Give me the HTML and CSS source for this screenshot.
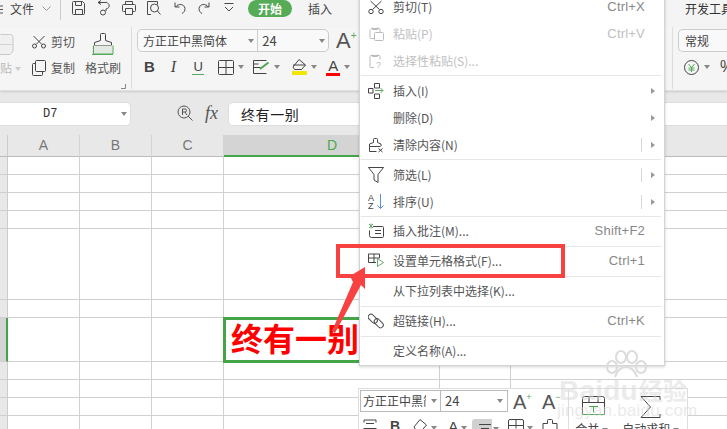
FILE: index.html
```html
<!DOCTYPE html>
<html lang="zh">
<head>
<meta charset="utf-8">
<title>WPS 表格</title>
<link rel="stylesheet" href="styles.css">
</head>
<body>
<div class="app">
  <header class="topbar">
    <svg class="tb-menu" width="3" height="12" viewBox="0 0 3 12"><path d="M0 3h3M0 6.500h3M0 10h3" stroke="#555" fill="none"/></svg>
    <span class="tb-file">文件</span>
    <svg class="tb-chev" width="9" height="6" viewBox="0 0 9 6"><path d="M.5.500 4.500 4.500 8.500.500" stroke="#999" fill="none"/></svg>
    <span class="tb-div"></span>
    <svg class="tb-i tb-save" width="16" height="16" viewBox="0 0 16 16"><path d="M2.500 1.500h9l2 2v10a1 1 0 0 1-1 1h-10a1 1 0 0 1-1-1v-11a1 1 0 0 1 1-1zM4.500 1.500v4h6v-4M4.500 14.500v-5h7v5" stroke="#4a4a4a" fill="none"/></svg>
    <svg class="tb-i" width="16" height="16" viewBox="0 0 16 16"><path d="M1 2.500h6a4 4 0 0 1 5 2c1 2.500-1 4-3 4.500v2M1 2.500l3-2M1 2.500l3 2" stroke="#4a4a4a" fill="none"/><circle cx="6" cy="12.500" r="2.500" stroke="#4a4a4a" fill="none"/></svg>
    <svg class="tb-i tb-print" width="16" height="16" viewBox="0 0 16 16"><path d="M4.500 4.500v-3h7v3M4 11.500h-1.500a1 1 0 0 1-1-1v-5a1 1 0 0 1 1-1h11a1 1 0 0 1 1 1v5a1 1 0 0 1-1 1h-1.500M4.500 8.500h7v6h-7z" stroke="#4a4a4a" fill="none"/></svg>
    <svg class="tb-i tb-prev" width="16" height="16" viewBox="0 0 16 16"><path d="M5 14.500h-3.500v-13h10v3" stroke="#4a4a4a" fill="none"/><circle cx="8.500" cy="8" r="4" stroke="#4a4a4a" fill="none"/><path d="M11.500 11l3 3.500" stroke="#4a4a4a" fill="none"/></svg>
    <svg class="tb-i tb-undo" width="16" height="16" viewBox="0 0 16 16"><path d="M3 2.500v4.500h4.500M3.500 7c3-4 9-3 9.500 1.500.2 2-1 4-3 5" stroke="#4a4a4a" fill="none"/></svg>
    <svg class="tb-i tb-redo" width="16" height="16" viewBox="0 0 16 16"><path d="M13 2.500v4.500h-4.500M12.500 7c-3-4-9-3-9.500 1.500-.2 2 1 4 3 5" stroke="#4a4a4a" fill="none"/></svg>
    <svg class="tb-i tb-more" width="16" height="16" viewBox="0 0 16 16"><path d="M3.500 3.500h9M4 7l4 4 4-4" stroke="#4a4a4a" fill="none"/></svg>
    <span class="tb-pill">开始</span>
    <span class="tb-tab">插入</span>
    <span class="tb-dev">开发工具</span>
  </header>

  <section class="ribbon">
    <div class="rb-clip">
      <div class="rb-paste">
        <svg width="14" height="24" viewBox="0 0 14 24"><path d="M.5 2.500h9a3 3 0 0 1 3.500 3v13.500l-3 3.500h-10" stroke="#c8c8c8" fill="#f0f0f0"/><path d="M0 12.500h13.500" stroke="#d4d4d4" fill="none"/></svg>
        <span class="rb-paste-label">贴<i class="caret caret-pale"></i></span>
      </div>
      <div class="rb-cut">
        <div class="rb-line">
          <svg width="14" height="14" viewBox="0 0 14 14"><circle cx="2.500" cy="11" r="2" stroke="#444" fill="none"/><circle cx="11.500" cy="11" r="2" stroke="#444" fill="none"/><path d="M1.500 1 10 9.500M12.500 1 4 9.500" stroke="#444" fill="none"/></svg>
          <span>剪切</span>
        </div>
        <div class="rb-line">
          <svg width="14" height="16" viewBox="0 0 14 16"><path d="M4.500.500h8a1 1 0 0 1 1 1v9a1 1 0 0 1-1 1h-8a1 1 0 0 1-1-1v-9a1 1 0 0 1 1-1zM3.500 3.500h-2a1 1 0 0 0-1 1v10a1 1 0 0 0 1 1h8a1 1 0 0 0 1-1v-3" stroke="#444" fill="none"/></svg>
          <span>复制</span>
        </div>
      </div>
      <div class="rb-brush">
        <svg width="22" height="22" viewBox="0 0 22 22"><path d="M8.500 7.500v-6a1 1 0 0 1 1-1h3a1 1 0 0 1 1 1v6l6 2v3h-17v-3z" stroke="#444" fill="#f5f5f5"/><path d="M1.500 12.500h19v9h-21v-9" fill="#e3e9e3"/><path d="M1.500 12.500v8.500h19.500v-8.500M0 21.500h21" stroke="#56a95c" fill="none"/></svg>
        <span>格式刷</span>
      </div>
      <svg class="rb-launch" width="5" height="5" viewBox="0 0 5 5"><path d="M4.500 0v4.500h-4.500" stroke="#888" fill="none"/></svg>
    </div>

    <div class="rb-font">
      <div class="rb-font-top">
        <div class="combo">
          <span class="combo-name">方正正中黑简体<i class="caret"></i></span>
          <span class="combo-size">24<i class="caret"></i></span>
        </div>
        <span class="grow-a">A<sup>+</sup></span>
      </div>
      <div class="rb-font-bottom">
        <b class="fb-b">B</b>
        <i class="fb-i">I</i>
        <span class="fb-u">U</span>
        <svg class="fb-border" width="16" height="15" viewBox="0 0 16 15"><path d="M1.500.500h13a1 1 0 0 1 1 1v12a1 1 0 0 1-1 1h-13a1 1 0 0 1-1-1v-12a1 1 0 0 1 1-1zM8 .5v14M.5 7.500h15" stroke="#444" fill="none"/></svg><i class="caret"></i>
        <svg class="fb-cond" width="17" height="15" viewBox="0 0 17 15"><path d="M13.500.500h-13v13h13M.5 7.500h7M.5 4h5" stroke="#444" fill="none"/><path d="M7 9 15.500 2.500" stroke="#4da654" stroke-width="2" fill="none"/></svg><i class="caret"></i>
        <svg class="fb-fill" width="16" height="17" viewBox="0 0 16 17"><path d="M8 .5 14.500 6l-4 4.500h-7l-1.500-2.500z" stroke="#444" fill="none"/><path d="M2 6h12.500" stroke="#444" fill="none"/><path d="M1 12h14a1 1 0 0 1 1 1v2a1 1 0 0 1-1 1h-14z" fill="#f4e500"/></svg><i class="caret"></i>
        <span class="fb-a">A</span><i class="caret"></i>
      </div>
    </div>

    <div class="rb-num">
      <div class="num-combo">常规</div>
      <div class="num-row">
        <svg width="15" height="15" viewBox="0 0 15 15"><circle cx="7.500" cy="7.500" r="7" stroke="#444" fill="none"/><path d="M4.500 4 7.500 7.500 10.500 4M7.500 7.500v4.500M4.500 8h6M4.500 10h6" stroke="#4da654" fill="none"/></svg>
        <i class="caret"></i>
        <span class="num-pct">%</span>
      </div>
    </div>
  </section>

  <section class="formula">
    <div class="namebox"><span>D7</span><i class="caret"></i></div>
    <svg class="fx-search" width="17" height="17" viewBox="0 0 17 17"><circle cx="7" cy="7" r="6" stroke="#555" fill="none"/><path d="M5.500 10v-6h2.500a1.500 1.500 0 0 1 0 3h-2.500M8 7l2 3M11 11l4.500 4.500" stroke="#555" fill="none"/></svg>
    <span class="fx-label">fx</span>
    <div class="fx-input">终有一别</div>
  </section>

  <section class="sheet">
    <div class="heads">
      <span class="h-corner"></span>
      <span class="h h-a">A</span>
      <span class="h h-a">B</span>
      <span class="h h-a">C</span>
      <span class="h h-d">D</span>
      <span class="h h-e"></span>
      <span class="h h-f">F</span>
    </div>
    <div class="r"><i class="g"></i><i class="c"></i><i class="c"></i><i class="c"></i><i class="c d"></i><i class="c e"></i><i class="c f"></i></div>
    <div class="r"><i class="g"></i><i class="c"></i><i class="c"></i><i class="c"></i><i class="c d"></i><i class="c e"></i><i class="c f"></i></div>
    <div class="r"><i class="g"></i><i class="c"></i><i class="c"></i><i class="c"></i><i class="c d"></i><i class="c e"></i><i class="c f"></i></div>
    <div class="r"><i class="g"></i><i class="c"></i><i class="c"></i><i class="c"></i><i class="c d"></i><i class="c e"></i><i class="c f"></i></div>
    <div class="r r-tall"><i class="g"></i><i class="c"></i><i class="c"></i><i class="c"></i><i class="c d"></i><i class="c e"></i><i class="c f"></i></div>
    <div class="r"><i class="g"></i><i class="c"></i><i class="c"></i><i class="c"></i><i class="c d"></i><i class="c e"></i><i class="c f"></i></div>
    <div class="r r-sel"><i class="g g-sel"></i><i class="c"></i><i class="c"></i><i class="c"></i><div class="c d cell-sel">终有一别</div><i class="c e"></i><i class="c f"></i></div>
    <div class="r"><i class="g"></i><i class="c"></i><i class="c"></i><i class="c"></i><i class="c d"></i><i class="c e"></i><i class="c f"></i></div>
    <div class="r"><i class="g"></i><i class="c"></i><i class="c"></i><i class="c"></i><i class="c d"></i><i class="c e"></i><i class="c f"></i></div>
    <div class="r"><i class="g"></i><i class="c"></i><i class="c"></i><i class="c"></i><i class="c d"></i><i class="c e"></i><i class="c f"></i></div>
    <div class="r"><i class="g"></i><i class="c"></i><i class="c"></i><i class="c"></i><i class="c d"></i><i class="c e"></i><i class="c f"></i></div>
  </section>

  <nav class="menu">
    <div class="mi">
      <svg width="16" height="16" viewBox="0 0 16 16"><circle cx="3" cy="12.500" r="2.200" stroke="#444" fill="none"/><circle cx="13" cy="12.500" r="2.200" stroke="#444" fill="none"/><path d="M2.500 2 11.500 10.500M13.500 2 4.500 10.500" stroke="#444" fill="none"/></svg>
      <span class="ml">剪切(T)</span><span class="ms">Ctrl+X</span>
    </div>
    <div class="mi off">
      <svg width="16" height="16" viewBox="0 0 16 16"><path d="M3 2.500h8a1 1 0 0 1 1 1v2.500M6 12.500h-3a1 1 0 0 1-1-1v-8M4.500 1.500v2h5v-2" stroke="#bbb" fill="none"/><rect x="6.500" y="6.500" width="9" height="8" rx="1" stroke="#bbb" fill="none"/></svg>
      <span class="ml">粘贴(P)</span><span class="ms">Ctrl+V</span>
    </div>
    <div class="mi off">
      <svg width="16" height="16" viewBox="0 0 16 16"><path d="M6 14.500h-3a1 1 0 0 1-1-1v-10a1 1 0 0 1 1-1h8a1 1 0 0 1 1 1v3M4.500 1.500v2h5v-2" stroke="#bbb" fill="none"/><text class="mq" x="8" y="15">?</text></svg>
      <span class="ml">选择性粘贴(S)...</span>
    </div>
    <div class="msep"></div>
    <div class="mi">
      <svg width="16" height="16" viewBox="0 0 16 16"><path d="M.5 5.500h4.500v4.500h-4.500zM6.500.5h5v4.500h-5zM6.500 11h5v4.500h-5z" stroke="#444" fill="none"/><path d="M7 7.500h8M12.500 5l2.500 2.500-2.500 2.500" stroke="#62a86b" fill="none"/></svg>
      <span class="ml">插入(I)</span><i class="arr"></i>
    </div>
    <div class="mi">
      <span class="noicon"></span>
      <span class="ml">删除(D)</span><i class="arr"></i>
    </div>
    <div class="mi">
      <svg width="16" height="16" viewBox="0 0 16 16"><path d="M5.500 5.500v-3a1 1 0 0 1 1-1h2a1 1 0 0 1 1 1v3l3.500 1.500v2M1.500 9.500v5h7M1.500 9.500v-2.500l4-1.500M1.500 9.500h11" stroke="#444" fill="none"/><path d="M10.500 11.500l4 3.500M14.500 11.500l-4 3.500" stroke="#444" fill="none"/></svg>
      <span class="ml">清除内容(N)</span><i class="rule"></i><i class="arr"></i>
    </div>
    <div class="msep"></div>
    <div class="mi">
      <svg width="16" height="16" viewBox="0 0 16 16"><path d="M.5.500h15l-5.500 7v8l-4-2.500v-5.500z" stroke="#444" fill="none"/></svg>
      <span class="ml">筛选(L)</span><i class="rule"></i><i class="arr"></i>
    </div>
    <div class="mi">
      <svg width="16" height="17" viewBox="0 0 16 17"><text class="az" x="0" y="7.500">A</text><text class="az" x="0" y="16">Z</text><path d="M12.500 1v14.500M9.500 12.500l3 3 3-3" stroke="#5b8fd6" fill="none"/></svg>
      <span class="ml">排序(U)</span><i class="rule"></i><i class="arr"></i>
    </div>
    <div class="msep"></div>
    <div class="mi mi-up">
      <svg width="16" height="16" viewBox="0 0 16 16"><path d="M5 3.500h9.500a1 1 0 0 1 1 1v9a1 1 0 0 1-1 1h-11a2 2 0 0 1-2-2v-5M7 7.500h6M7 10.500h6" stroke="#444" fill="none"/><path d="M1 1l4 4M5 1l-4 4M3 .5v5" stroke="#62a86b" fill="none"/></svg>
      <span class="ml">插入批注(M)...</span><span class="ms">Shift+F2</span>
    </div>
    <div class="msep"></div>
    <div class="mi mi-up">
      <svg width="16" height="16" viewBox="0 0 16 16"><path d="M8 9.500h-7.500v-8.500h11v4M.5 5h11M6 1v8.500" stroke="#444" fill="none"/><path d="M9.500 5.500v8l6-4z" stroke="#62a86b" fill="none"/></svg>
      <span class="ml">设置单元格格式(F)...</span><span class="ms">Ctrl+1</span>
    </div>
    <div class="msep"></div>
    <div class="mi mi-up">
      <span class="noicon"></span>
      <span class="ml">从下拉列表中选择(K)...</span>
    </div>
    <div class="msep"></div>
    <div class="mi mi-up">
      <svg width="16" height="16" viewBox="0 0 16 16"><rect x="-.5" y="3" width="10.500" height="5.500" rx="2.700" transform="rotate(45 4.750 5.750)" stroke="#444" fill="none"/><rect x="5.500" y="7.500" width="10.500" height="5.500" rx="2.700" transform="rotate(45 10.750 10.250)" stroke="#444" fill="none"/></svg>
      <span class="ml">超链接(H)...</span><span class="ms">Ctrl+K</span>
    </div>
    <div class="msep"></div>
    <div class="mi mi-up">
      <span class="noicon"></span>
      <span class="ml">定义名称(A)...</span>
    </div>
  </nav>

  <div class="mini">
    <div class="mini-top">
      <div class="mini-combo">
        <span class="mc-name"><span class="mc-text">方正正中黑简体</span><i class="caret"></i></span>
        <span class="mc-size">24<i class="caret"></i></span>
      </div>
      <span class="mini-a">A<sup>+</sup></span>
      <span class="mini-a mini-a2">A<sup>−</sup></span>
      <span class="mini-div"></span>
      <svg class="mini-merge" width="23" height="19" viewBox="0 0 23 19"><path d="M.5 18.500v-16a2 2 0 0 1 2-2h18a2 2 0 0 1 2 2v16" stroke="#444" fill="none"/><path d="M.5 6.500h22" stroke="#444" fill="none"/><path d="M7 .5v6M16 .5v6" stroke="#444" fill="none"/><path d="M.5 18.500h22M7 10.500h9M11.500 10.500v6" stroke="#4da654" fill="none"/></svg>
      <svg class="mini-sum" width="21" height="22" viewBox="0 0 21 22"><path d="M20 4v-3.500h-19l9.500 10.500-9.500 10.500h19v-3.500" stroke="#444" fill="none"/></svg>
    </div>
    <div class="mini-bottom">
      <svg class="mb-a" width="14" height="10" viewBox="0 0 14 10"><path d="M1 3.500v-2.500h12v2.500M3 4.500h8M.5 9.500h13" stroke="#444" fill="none"/></svg>
      <b class="mb-b">B</b>
      <svg class="mb-c" width="16" height="10" viewBox="0 0 16 10"><path d="M8 .5 14.500 6l-4 4.500h-7l-1.500-2.500z" stroke="#444" fill="none"/></svg><i class="caret"></i>
      <span class="mb-t">A</span><i class="caret"></i>
      <span class="mb-hl"><svg width="14" height="10" viewBox="0 0 14 10"><path d="M1 1.500h12M3 5.500h8" stroke="#444" fill="none"/></svg><i class="mb-hl-end"><i class="caret"></i></i></span>
      <svg class="mb-g" width="16" height="10" viewBox="0 0 16 10"><path d="M.5 10v-8a1.500 1.500 0 0 1 1.500-1.500h12a1.500 1.500 0 0 1 1.500 1.500v8M.5 6.500h15M8 .5v9" stroke="#444" fill="none"/></svg><i class="caret"></i>
      <svg class="mb-s" width="16" height="10" viewBox="0 0 16 10"><path d="M5.500 4.500v-3a1 1 0 0 1 1-1h3a1 1 0 0 1 1 1v3h4.500v5.500M1 10v-5.500h4.500" stroke="#444" fill="none"/></svg>
      <span class="mb-l1">合并<i class="caret"></i></span>
      <span class="mb-l2">自动求和<i class="caret"></i></span>
    </div>
  </div>

  <div class="wm">
    <svg class="wm-paw" width="54" height="28" viewBox="0 0 54 28"><g fill="none" stroke="#dcdcdc" stroke-width="2"><ellipse cx="13" cy="17" rx="5" ry="6"/><ellipse cx="22" cy="7" rx="5" ry="6"/><ellipse cx="33" cy="7" rx="5" ry="6"/><ellipse cx="42" cy="17" rx="5" ry="6"/><path d="M16 27c2-7 7-10 11-10s9 3 11 10"/></g></svg>
    <div class="wm-b">Baidu<span class="wm-cn">经验</span></div>
    <div class="wm-u">jingyan.baidu.com</div>
  </div>

  <div class="note-box"></div>
  <svg class="note-arrow" width="40" height="70" viewBox="0 0 40 70"><path d="M2 66 23 17 20 11 35 2 35 24 31 20 5 68z" fill="#f84242"/></svg>
</div>
</body>
</html>
```

FILE: styles.css
```css
* { box-sizing: border-box; }
html, body { margin: 0; padding: 0; }
body { font-family: "Noto Sans CJK SC", "Liberation Sans", sans-serif; font-size: 12px; color: #444; }
i { font-style: normal; }

.app { position: relative; width: 727px; height: 429px; overflow: hidden; background: #fff; }

.caret { display: inline-block; flex: none; width: 0; height: 0; border-left: 3.5px solid transparent; border-right: 3.5px solid transparent; border-top: 4px solid #888; }
.caret-pale { border-top-color: #ccc; margin-left: 3px; vertical-align: 2px; }

/* top bar */
.topbar { display: flex; align-items: flex-start; height: 27px; background: #f4f4f4; line-height: 18px; white-space: nowrap; }
.topbar > * { flex: none; }
.tb-menu { margin-top: 3px; }
.tb-file { margin-left: 7px; color: #444; }
.tb-chev { margin: 6px 0 0 8px; }
.tb-div { width: 1px; height: 20px; margin-left: 9px; background: #ccc; }
.tb-save { margin-left: 10px; }
.tb-i + .tb-i { margin-left: 10px; }
.tb-i.tb-print { margin-left: 8px; }
.tb-i.tb-prev { margin-left: 9px; }
.tb-i.tb-undo { margin-left: 10px; }
.tb-i.tb-redo { margin-left: 8px; }
.tb-i.tb-more { margin-left: 9px; }
.tb-pill { width: 44px; height: 17px; margin-left: 11px; border-radius: 9px; background: #56ab57; color: #fff; font-weight: 700; text-align: center; line-height: 17px; }
.tb-tab { margin-left: 16px; }
.tb-dev { margin-left: 353px; color: #333; }

/* ribbon */
.ribbon { display: flex; height: 64px; background: #f5f5f5; border-bottom: 1px solid #e0e0e0; box-shadow: 0 1px 2px rgba(0,0,0,.12); position: relative; }
.rb-clip { display: flex; align-items: flex-start; width: 132px; height: 62px; border-right: 1px solid #ddd; flex: none; }
.rb-paste { width: 32px; flex: none; padding-top: 5px; display: flex; flex-direction: column; }
.rb-paste-label { color: #bbb; margin-top: 3px; line-height: 18px; }
.rb-cut { width: 53px; flex: none; padding-top: 6px; display: flex; flex-direction: column; gap: 8px; }
.rb-line { display: flex; align-items: center; gap: 5px; height: 18px; color: #555; line-height: 18px; }
.rb-brush { width: 36px; flex: none; padding-top: 6px; display: flex; flex-direction: column; align-items: center; color: #555; line-height: 18px; gap: 4px; }
.rb-launch { margin: 57px 0 0 0; flex: none; }

.rb-font { width: 540px; flex: none; padding: 2px 0 0 5px; }
.rb-font-top { display: flex; align-items: center; height: 23px; }
.combo { display: flex; width: 192px; height: 23px; border: 1px solid #ccc; border-radius: 5px; background: #f9f9f9; line-height: 21px; }
.combo-name { display: flex; align-items: center; justify-content: space-between; width: 121px; padding: 0 3px 0 5px; border-right: 1px solid #ccc; font-size: 12px; color: #444; }
.combo-size { display: flex; align-items: center; justify-content: space-between; width: 70px; padding: 0 3px 0 4px; font-size: 13px; }
.grow-a { margin-left: 7px; font: 22px/23px "Liberation Sans", sans-serif; color: #555; }
.grow-a sup { font-size: 10px; color: #5aa860; line-height: 0; vertical-align: 9px; }

.rb-font-bottom { display: flex; align-items: center; height: 20px; margin-top: 5px; }
.fb-b { margin-left: 7px; font: 700 15px/20px "Liberation Sans", sans-serif; color: #444; }
.fb-i { margin-left: 16px; font: italic 16px/20px "Liberation Serif", serif; color: #444; }
.fb-u { margin-left: 16px; width: 12px; font: 13px/14px "Liberation Sans", sans-serif; color: #444; border-bottom: 1px solid #5aa860; text-align: center; }
.fb-border { margin-left: 14px; }
.rb-font-bottom .caret { margin-left: 4px; }
.fb-cond { margin-left: 9px; }
.fb-fill { margin-left: 11px; }
.fb-a { margin-left: 9px; width: 14px; font: 15px/15px "Liberation Sans", sans-serif; color: #444; border-bottom: 3px solid #f00; text-align: center; }

.rb-num { flex: 1; border-left: 1px solid #ddd; height: 62px; padding: 2px 0 0 5px; }
.num-combo { height: 23px; border: 1px solid #ccc; border-right: 0; border-radius: 5px 0 0 5px; background: #f9f9f9; padding-left: 6px; line-height: 21px; }
.num-row { display: flex; align-items: center; height: 20px; margin-top: 5px; padding-left: 6px; }
.num-row .caret { margin-left: 5px; }
.num-pct { margin-left: 10px; font: 16px/20px "Liberation Sans", sans-serif; }

/* formula bar */
.formula { display: flex; align-items: center; height: 44px; background: #e8e8e8; padding-top: 1px; }
.namebox { display: flex; align-items: center; width: 131px; height: 24px; background: #fff; border: 1px solid #ddd; border-left: 0; border-radius: 0 5px 5px 0; padding-right: 3px; }
.namebox span { flex: 1; padding-left: 43px; font: 12px "Liberation Mono", monospace; color: #333; }
.fx-search { margin-left: 46px; flex: none; }
.fx-label { margin-left: 11px; width: 23px; font: italic 18px "Liberation Serif", serif; color: #555; }
.fx-input { flex: 1; height: 24px; background: #fff; border: 1px solid #ddd; border-right: 0; border-radius: 5px 0 0 5px; padding-left: 12px; font-size: 14px; letter-spacing: .6px; line-height: 22px; color: #222; }

/* sheet */
.sheet { display: flex; flex-direction: column; }
.heads { display: flex; height: 22px; background: #e8e8e8; }
.h-corner { width: 8px; border-right: 1px solid #ccc; border-bottom: 1px solid #bbb; }
.h { font: 14px/21px "Liberation Sans", sans-serif; color: #777; text-align: center; border-bottom: 1px solid #bbb; }
.h-a { width: 72px; border-right: 1px solid #d4d4d4; }
.h-d { width: 216px; background: #d4d4d4; color: #48a84e; border-bottom: 2px solid #43a548; }
.h-e { width: 198px; }
.h-f { flex: 1; text-align: left; padding-left: 1px; }

.r { display: flex; height: 18px; }
.r-tall { height: 71px; }
.r-sel { height: 44px; }
.g { width: 8px; background: #e8e8e8; border-right: 1px solid #ccc; border-bottom: 1px solid #d0d0d0; flex: none; }
.g-sel { background: #d4d4d4; border-right: 2px solid #43a548; }
.c { width: 72px; border-right: 1px solid #d0d0d0; border-bottom: 1px solid #d0d0d0; flex: none; display: block; }
.d { width: 216px; }
.e { width: 71px; }
.f { flex: 1; border-right: 0; }
.cell-sel { position: relative; z-index: 1; margin: -1px 0 -1px -1px; width: 217px; height: 46px; border: 3px solid #43a548; padding-left: 5px; color: #f00; font-weight: 700; font-size: 32px; line-height: 34px; white-space: nowrap; }

/* context menu */
.menu { position: absolute; left: 359px; top: -7px; width: 306px; height: 373px; background: #fff; border: 1px solid #d4d4d4; border-top: 0; box-shadow: 0 1px 3px rgba(0,0,0,.18); z-index: 3; }
.mi { display: flex; align-items: center; height: 27px; padding-left: 8px; line-height: 18px; color: #555; }
.mi-up { padding-bottom: 2px; }
.mi svg, .noicon { width: 16px; flex: none; margin-right: 9px; }
.ml { flex: 1; }
.ms { margin-right: 19px; font: 13px "Liberation Sans", sans-serif; letter-spacing: .2px; color: #888; }
.off, .off .ms { color: #c0c0c0; }
.msep { height: 1px; margin: 1px 3px 1px 1px; background: #e6e6e6; }
.rule { width: 1px; height: 14px; margin-right: 9px; background: #d8d8d8; }
.arr { width: 0; height: 0; margin-right: 9px; border-top: 3.5px solid transparent; border-bottom: 3.5px solid transparent; border-left: 4px solid #999; }
.mq { font: 9px "Liberation Sans", sans-serif; fill: #bbb; }
.az { font: 9px "Liberation Sans", sans-serif; fill: #444; }

/* mini toolbar */
.mini { position: absolute; left: 358px; top: 388px; width: 330px; height: 60px; background: #fff; border: 1px solid #ddd; padding: 1px; z-index: 2; }
.mini-top { display: flex; align-items: flex-start; height: 29px; }
.mini-combo { display: flex; width: 148px; height: 22px; border: 1px solid #bbb; line-height: 20px; flex: none; }
.mc-name { display: flex; align-items: center; width: 80px; border-right: 1px solid #bbb; padding: 0 3px 0 2px; }
.mc-text { width: 63px; overflow: hidden; white-space: nowrap; margin-right: 5px; }
.mc-size { display: flex; align-items: center; justify-content: space-between; flex: 1; padding: 0 4px; font-size: 13px; }
.mini-a { margin-left: 5px; width: 24px; flex: none; font: 20px/24px "Liberation Sans", sans-serif; color: #555; white-space: nowrap; }
.mini-a sup { font-size: 9px; color: #5aa860; line-height: 0; vertical-align: 9px; }
.mini-a2 { width: 26px; }
.mini-div { width: 1px; height: 60px; background: #ddd; flex: none; }
.mini-merge { margin: 6px 0 0 13px; flex: none; }
.mini-sum { margin: 6px 0 0 35px; flex: none; }
.mini-bottom { display: flex; align-items: flex-start; height: 14px; line-height: 14px; white-space: nowrap; }
.mini-bottom > * { flex: none; }
.mini-bottom .caret { margin: 7px 0 0 3px; }
.mb-a { margin-left: 3px; }
.mb-b { margin-left: 13px; font: 700 14px/14px "Liberation Sans", sans-serif; }
.mb-c { margin-left: 12px; }
.mb-t { margin-left: 11px; font: 15px/15px "Liberation Sans", sans-serif; }
.mb-hl { display: flex; margin-left: 5px; width: 29px; height: 12px; background: #d0d0d0; border-radius: 3px 3px 0 0; padding: 4px 0 0 6px; }
.mb-hl svg { flex: none; }
.mb-hl-end { flex: none; width: 9px; height: 12px; margin: -4px 0 0 0; background: #fff; }
.mb-hl-end .caret { margin: 7px 0 0 1px; }
.mb-g { margin-left: 7px; }
.mb-s { margin-left: 9px; }
.mb-l1 { margin: 3px 0 0 17px; }
.mb-l2 { margin: 3px 0 0 14px; }
.mb-l1 .caret, .mb-l2 .caret { margin: 0 0 0 3px; vertical-align: 2px; }

/* watermark */
.wm { position: absolute; left: 557px; top: 350px; width: 135px; z-index: 4; pointer-events: none; }
.wm-paw { display: block; margin-left: 42px; }
.wm-b { font: 700 28px/24px "Liberation Sans", sans-serif; color: rgba(215,215,215,.5); white-space: nowrap; margin-left: 2px; letter-spacing: .2px; }
.wm-cn { font: 700 24px/24px "Noto Sans CJK SC", sans-serif; margin-left: 1px; }
.wm-u { font: 17px/18px "Liberation Sans", sans-serif; color: rgba(215,215,215,.55); margin-top: -1px; letter-spacing: .2px; white-space: nowrap; }

/* annotations */
.note-box { position: absolute; left: 336px; top: 244px; width: 229px; height: 34px; border: 4px solid #f84242; z-index: 5; }
.note-arrow { position: absolute; left: 330px; top: 265px; z-index: 6; }
```
